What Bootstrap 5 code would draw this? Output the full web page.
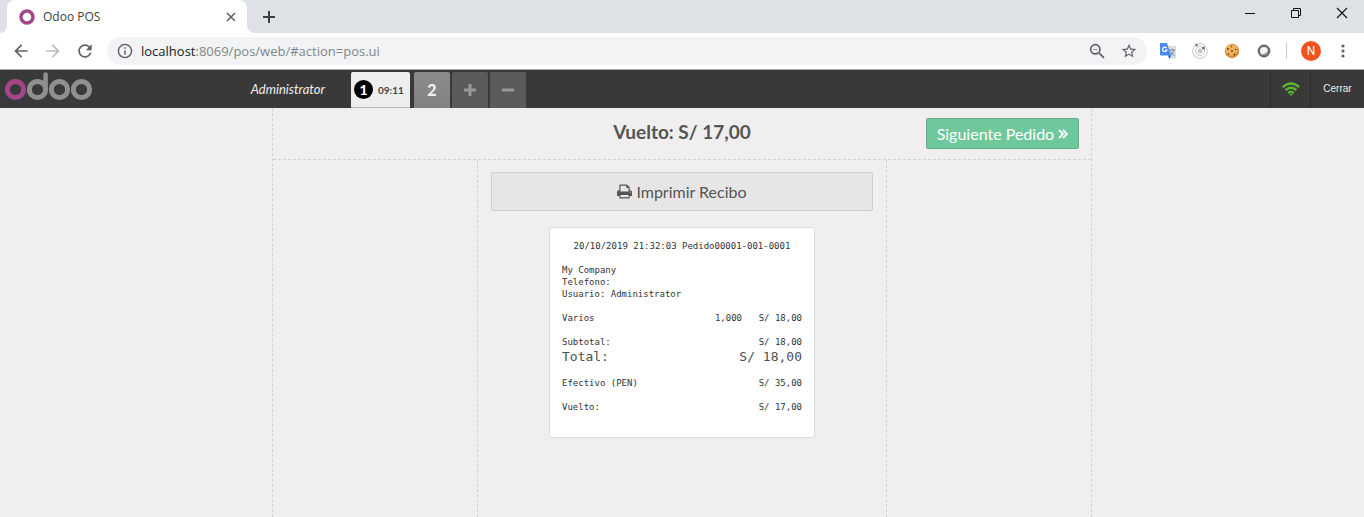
<!DOCTYPE html>
<html lang="es">
<head>
<meta charset="utf-8">
<meta name="viewport" content="width=device-width, initial-scale=1">
<title>Odoo POS</title>
<link rel="stylesheet" href="https://cdn.jsdelivr.net/npm/bootstrap@5.3.0/dist/css/bootstrap.min.css">
<style>
body { font-family: Lato, sans-serif; color: #555; background: #f0eeee; line-height: 20px; }
button { border: 0; background: none; padding: 0; }
svg { display: block; flex: none; }
/* Browser window */
.tab-strip { background: #dee1e6; height: 33px; }
.strip-edge { width: 7px; border-radius: 0 0 8px 0; background: #dee1e6; }
.strip-rest { border-radius: 0 0 0 8px; background: #dee1e6; padding-left: 15px; }
.tab-back { background: #dee1e6; }
.window-tab { width: 240px; padding: 0 9px 0 12px; background: #fff; border-radius: 8px 8px 0 0; }
.page-name { font: 12px/16px "Open Sans", sans-serif; color: #3c4043; }
.window-buttons { gap: 34px; padding: 6px 16px 0 0; }
.browser-bar { height: 37px; padding: 0 13px 0 11px; background: #fff; border-bottom: 1px solid #a9a9a9; color: #5f6368; }
.address { height: 28px; border-radius: 14px; background: #f1f3f4; padding: 0 10px; margin: 0 13px 0 12px; }
.address-text { font: 13px/20px "Open Sans", sans-serif; color: #80868b; }
.address-text b { color: #202124; font-weight: 400; }
.bar-end { gap: 14px; }
.avatar { width: 20px; height: 20px; border-radius: 50%; background: #f4511e; color: #fff; font: 12px/20px Roboto, sans-serif; }
.divider { width: 1px; height: 16px; background: #c8cacd; }
/* Point of sale header */
.pos-header { height: 38px; background: #393939; color: #eee; }
.pos-brand { width: 325px; padding-left: 4px; }
.cashier { font-size: 13px; font-style: italic; }
.order-tabs { gap: 2px; padding-left: 26px; }
.order-tab { width: 36px; height: 36px; border-radius: 2px 2px 0 0; background: linear-gradient(#8c8c8c, #818181); color: #f0f0f0; font-size: 16px; font-weight: 900; }
.order-tab.current { width: 59px; padding-left: 3px; background: #eee; color: #444; border-bottom: 1px solid #b5b5b5; font-size: 10px; font-weight: 700; margin-right: 2px; gap: 5px; }
.order-tab.tool { background: #5b5b5b; color: #999; }
.order-number { width: 19px; height: 19px; border-radius: 50%; background: #000; color: #fff; font-size: 14px; line-height: 19px; font-weight: 900; }
.header-cell { border-left: 1px solid #292929; }
.network { width: 40px; }
.close-pos { width: 54px; font: 10px/16px "Liberation Sans", sans-serif; color: #eee; }
/* Receipt screen */
.screen { width: calc(60% + 2px); border: dashed #d3d1d1; border-width: 0 1px; }
.screen-head { height: 52px; border-bottom: 1px dashed #d3d1d1; }
.change { font-size: 19px; line-height: 24px; font-weight: 700; }
.next-order { height: 31px; margin: 10px 12px 0 0; padding: 0 10px; background: #6ec89b; border: 1px solid #64af8a; border-radius: 2px; color: #fff; font-size: 16px; }
.receipt-pane { border: dashed #d3d1d1; border-width: 0 1px; padding: 12px 13px; }
.print-receipt { height: 39px; background: #e6e6e6; border: 1px solid #cecece; border-radius: 2px; color: #555; font-size: 16px; }
.ticket { width: 266px; margin-top: 16px; padding: 12px 12px 24px; border: 1px solid #dcdcdc; border-radius: 3px; background: #fff; font: 9px/12px "DejaVu Sans Mono", monospace; color: #333; }
.ticket table { width: 100%; table-layout: fixed; margin-top: 12px; }
.ticket td { padding: 0; }
.ticket td:not(:first-child) { text-align: right; }
.ticket .grand { font-size: 13px; line-height: 17px; color: #505050; }
</style>
</head>
<body class="d-flex flex-column min-vh-100">
<div class="bg-white">
  <div class="d-flex bg-white">
    <div class="strip-edge"></div>
    <div class="tab-back"><div class="window-tab h-100 d-flex align-items-center">
      <svg width="16" height="16" viewBox="0 0 16 16"><circle cx="8" cy="8" r="6" fill="none" stroke="#a24689" stroke-width="3.5"/></svg>
      <span class="page-name ms-2 flex-grow-1">Odoo POS</span>
      <button aria-label="Cerrar pestaña"><svg width="14" height="14" viewBox="0 0 14 14" stroke="#5f6368" stroke-width="1.6"><path d="M3 3l8 8M11 3l-8 8"/></svg></button>
    </div></div>
    <div class="strip-rest tab-strip flex-grow-1 d-flex align-items-center justify-content-between">
      <button aria-label="Nueva pestaña"><svg width="14" height="14" viewBox="0 0 14 14" stroke="#3c4043" stroke-width="2"><path d="M7 1v12M1 7h12"/></svg></button>
      <div class="window-buttons d-flex align-self-start">
        <button aria-label="Minimizar"><svg width="12" height="14" viewBox="0 0 12 14"><path d="M1 7.500h10" stroke="#111"/></svg></button>
        <button aria-label="Restaurar"><svg width="12" height="14" viewBox="0 0 12 14" fill="none" stroke="#111"><path d="M1.500 4.500h7v7h-7zM3.500 4.500v-2h7v7h-2"/></svg></button>
        <button aria-label="Cerrar ventana"><svg width="12" height="14" viewBox="0 0 12 14" stroke="#111" stroke-width="1.100"><path d="M1 2l10 10M11 2L1 12"/></svg></button>
      </div>
    </div>
  </div>
  <div class="browser-bar d-flex align-items-center">
    <button aria-label="Atrás"><svg width="20" height="20" viewBox="0 0 24 24" fill="#5f6368"><path d="M20 11H7.830l5.590-5.590L12 4l-8 8 8 8 1.410-1.410L7.830 13H20z"/></svg></button>
    <button class="ms-2 me-2 ps-1" aria-label="Adelante"><svg width="20" height="20" viewBox="0 0 24 24" fill="#babcbe"><path d="M4 11h12.170l-5.590-5.590L12 4l8 8-8 8-1.410-1.410L16.170 13H4z"/></svg></button>
    <button class="ps-1" aria-label="Recargar"><svg width="20" height="20" viewBox="0 0 24 24" fill="#5f6368"><path d="M17.650 6.350C16.200 4.900 14.210 4 12 4c-4.420 0-7.990 3.580-7.990 8s3.570 8 7.990 8c3.730 0 6.840-2.550 7.730-6h-2.080c-.82 2.330-3.040 4-5.650 4-3.310 0-6-2.690-6-6s2.690-6 6-6c1.660 0 3.140.69 4.220 1.780L13 11h7V4z"/></svg></button>
    <div class="address flex-grow-1 d-flex align-items-center">
      <svg width="16" height="16" viewBox="1 1 22 22" fill="#5f6368"><path d="M11 7h2v2h-2zm0 4h2v6h-2zm1-9C6.480 2 2 6.480 2 12s4.480 10 10 10 10-4.480 10-10S17.520 2 12 2zm0 18c-4.410 0-8-3.590-8-8s3.590-8 8-8 8 3.590 8 8-3.590 8-8 8z"/></svg>
      <span class="address-text ms-2 flex-grow-1"><b>localhost</b>:8069/pos/web/#action=pos.ui</span>
      <button class="me-3" aria-label="Zoom"><svg width="16" height="16" viewBox="2 2 19 19" fill="#5f6368"><path d="M15.500 14h-.79l-.28-.27A6.470 6.470 0 0 0 16 9.500 6.500 6.500 0 1 0 9.500 16c1.610 0 3.090-.59 4.230-1.570l.27.28v.79l5 4.990L20.490 19zm-6 0a4.500 4.500 0 1 1 0-9 4.500 4.500 0 0 1 0 9zM7 9h5v1H7z"/></svg></button>
      <button aria-label="Favoritos"><svg width="16" height="16" viewBox="1 1 22 22" fill="#5f6368"><path d="M22 9.240l-7.190-.62L12 2 9.190 8.630 2 9.240l5.460 4.730L5.820 21 12 17.270 18.180 21l-1.630-7.030zM12 15.400l-3.760 2.270 1-4.280-3.320-2.880 4.380-.38L12 6.100l1.710 4.040 4.380.38-3.320 2.880 1 4.280z"/></svg></button>
    </div>
    <div class="bar-end d-flex align-items-center">
      <div class="d-flex gap-3">
        <svg width="16" height="16" viewBox="0 0 16 16"><path d="M7 3h9v12.500H10z" fill="#dcdcdc"/><path d="M9 7h6M12 6v1M14 7q-1 4-4.500 6M10.500 8.500q1.500 3 4 4" stroke="#6b8a99" fill="none"/><path d="M0 0h7l4 12.500H1q-1 0-1-1z" fill="#4889f4"/><path d="M8 12.500h3L9.500 16z" fill="#2a56c6"/><path d="M6.500 5a2.200 2.200 0 1 0 .4 2H5" stroke="#fff" stroke-width="1.200" fill="none"/></svg>
        <svg width="16" height="16" viewBox="0 0 16 16" fill="none" stroke="#c5c5c5"><circle cx="8" cy="8" r="7.300"/><circle cx="8" cy="8" r="4.500"/><circle cx="8" cy="8" r="2" fill="#c5c5c5"/><circle cx="4.500" cy="2" r="1.500" fill="#888" stroke="none"/><circle cx="11.500" cy="5" r="1.600" fill="#777" stroke="none"/></svg>
        <svg width="16" height="16" viewBox="0 0 16 16"><circle cx="8" cy="8" r="7.200" fill="#d98c35"/><circle cx="7.500" cy="7" r="5.800" fill="#f0b45e"/><g fill="#6b3513"><circle cx="4" cy="6" r=".9"/><circle cx="7.500" cy="3.500" r=".8"/><circle cx="8" cy="8" r=".9"/><circle cx="4.500" cy="11" r=".8"/><circle cx="11.500" cy="6.500" r=".8"/><circle cx="10.500" cy="11.500" r=".9"/></g></svg>
        <svg width="16" height="16" viewBox="0 0 16 16"><circle cx="8" cy="8" r="5.200" fill="#f2f2f2" stroke="#6c6c6c" stroke-width="2.400"/><path d="M12 7a4 4 0 0 1-6 4.500q4.500-.5 6-4.500z" fill="#8a8a8a"/></svg>
      </div>
      <span class="divider"></span>
      <span class="avatar text-center">N</span>
      <button aria-label="Menú"><svg width="16" height="16" viewBox="0 0 16 16" fill="#5f6368"><circle cx="8" cy="3" r="1.600"/><circle cx="8" cy="8" r="1.600"/><circle cx="8" cy="13" r="1.600"/></svg></button>
    </div>
  </div>
</div>
<header class="pos-header d-flex">
  <div class="pos-brand d-flex justify-content-between align-items-center">
    <svg class="align-self-start" width="90" height="34" viewBox="0 0 90 34" fill="none" stroke="#8f8f8f" stroke-width="5" role="img" aria-label="Odoo"><circle cx="11.500" cy="19.500" r="8.100" stroke="#a24689"/><circle cx="33.500" cy="19.500" r="8.100"/><path d="M41.600 19.500V4.500" stroke-width="4.500" stroke-linecap="round"/><circle cx="55.500" cy="19.500" r="8.100"/><circle cx="77.500" cy="19.500" r="8.100"/></svg>
    <span class="cashier">Administrator</span>
  </div>
  <nav class="order-tabs d-flex align-items-end flex-grow-1">
    <button class="order-tab current d-flex align-items-center"><span class="order-number">1</span>09:11</button>
    <button class="order-tab">2</button>
    <button class="order-tab tool d-flex align-items-center justify-content-center" aria-label="Nuevo pedido"><svg width="12" height="12" viewBox="0 0 12 12" stroke="#999" stroke-width="3"><path d="M6 0v12M0 6h12"/></svg></button>
    <button class="order-tab tool d-flex align-items-center justify-content-center" aria-label="Eliminar pedido"><svg width="12" height="12" viewBox="0 0 12 12" stroke="#999" stroke-width="3"><path d="M0 6h12"/></svg></button>
  </nav>
  <div class="header-cell network d-flex align-items-center justify-content-center">
    <svg width="18" height="14" viewBox="0 0 18 14" fill="none" stroke="#5bb531" stroke-width="2.400" role="img" aria-label="Conectado"><path d="M.8 5.200q8.200-7.600 16.400 0M3.500 8.200q5.500-5 11 0M6.200 11q2.800-2.400 5.600 0"/><path d="M7.300 12.300L9 14l1.700-1.700Q9 11.200 7.300 12.300z" fill="#5bb531" stroke="none"/></svg>
  </div>
  <button class="header-cell close-pos">Cerrar</button>
</header>
<main class="screen mx-auto flex-grow-1 d-flex flex-column">
  <div class="screen-head row g-0">
    <h1 class="change col-6 offset-3 text-center mb-0 pt-2 mt-1">Vuelto: S/ 17,00</h1>
    <div class="col-3 d-flex justify-content-end align-items-start">
      <button class="next-order d-flex align-items-center text-nowrap">Siguiente Pedido<svg class="ms-1" width="10" height="10" viewBox="0 0 10 10" fill="none" stroke="#fff" stroke-width="1.800"><path d="M1 1l4 4-4 4M5 1l4 4-4 4"/></svg></button>
    </div>
  </div>
  <div class="row g-0 flex-grow-1 justify-content-center">
    <section class="receipt-pane col-6">
      <button class="print-receipt w-100 d-flex align-items-center justify-content-center"><svg class="me-1" width="15" height="15" viewBox="64 64 1664 1664" fill="#555"><path d="M448 1536h896v-256h-896v256zm0-640h896v-384h-160q-40 0-68-28t-28-68v-160h-640v640zm1152 64q0-26-19-45t-45-19-45 19-19 45 19 45 45 19 45-19 19-45zm128 0v416q0 13-9.500 22.500t-22.500 9.500h-224v160q0 40-28 68t-68 28h-960q-40 0-68-28t-28-68v-160h-224q-13 0-22.500-9.500t-9.500-22.500v-416q0-79 56.500-135.500t135.500-56.500h64v-544q0-40 28-68t68-28h672q40 0 88 20t76 48l152 152q28 28 48 76t20 88v256h64q79 0 135.500 56.500t56.500 135.500z"/></svg>Imprimir Recibo</button>
      <article class="ticket mx-auto">
        <div class="text-center">20/10/2019 21:32:03 Pedido00001-001-0001</div>
        <div class="pt-2 mt-1">My Company<br>Telefono:<br>Usuario: Administrator</div>
        <table><tbody><tr><td class="w-50">Varios</td><td class="w-25">1,000</td><td class="w-25">S/ 18,00</td></tr></tbody></table>
        <table><tbody><tr><td>Subtotal:</td><td>S/ 18,00</td></tr><tr class="grand"><td>Total:</td><td>S/ 18,00</td></tr></tbody></table>
        <table><tbody><tr><td>Efectivo (PEN)</td><td>S/ 35,00</td></tr></tbody></table>
        <table><tbody><tr><td>Vuelto:</td><td>S/ 17,00</td></tr></tbody></table>
      </article>
    </section>
  </div>
</main>
<script src="https://cdn.jsdelivr.net/npm/bootstrap@5.3.0/dist/js/bootstrap.bundle.min.js"></script>
</body>
</html>
